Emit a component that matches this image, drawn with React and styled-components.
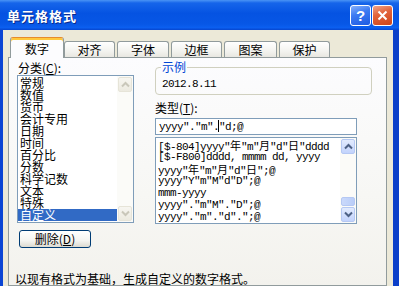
import React from "react"
import styled, { createGlobalStyle } from "styled-components"

const categories = [
  "常规",
  "数值",
  "货币",
  "会计专用",
  "日期",
  "时间",
  "百分比",
  "分数",
  "科学记数",
  "文本",
  "特殊",
  "自定义",
]

const formats = [
  '[$-804]yyyy"年"m"月"d"日"dddd',
  "[$-F800]dddd, mmmm dd, yyyy",
  'yyyy"年"m"月"d"日";@',
  'yyyy"Y"m"M"d"D";@',
  "mmm-yyyy",
  'yyyy"."m"M"."D";@',
  'yyyy"."m"."d".";@',
]

const tabs = [
  { label: "数字", width: 54, active: true },
  { label: "对齐", width: 51, gap: 0 },
  { label: "字体", width: 52, gap: 2 },
  { label: "边框", width: 51, gap: 2 },
  { label: "图案", width: 53, gap: 2 },
  { label: "保护", width: 51, gap: 2 },
]

const HAN = /([\u3000-\u9fff\uff00-\uffef]+)/

const mixed = text =>
  text.split(HAN).map((part, i) =>
    HAN.test(part) ? <Han key={i}>{part}</Han> : part
  )

const Chevron = ({ up, color }) => (
  <svg width="9" height="7" viewBox="0 0 9 7">
    <polyline
      points={up ? "1,5.5 4.5,2 8,5.5" : "1,1.5 4.5,5 8,1.5"}
      fill="none"
      stroke={color}
      strokeWidth="2"
    />
  </svg>
)

const ScrollBar = ({ disabled, thumb }) => (
  <Scroll>
    <ScrollBtn $disabled={disabled}>
      <Chevron up color={disabled ? "#C9C7BA" : "#4D6185"} />
    </ScrollBtn>
    <Track>{thumb && <Thumb />}</Track>
    <ScrollBtn $disabled={disabled}>
      <Chevron color={disabled ? "#C9C7BA" : "#4D6185"} />
    </ScrollBtn>
  </Scroll>
)

const App = () => {
  return (
    <>
      <GlobalStyle />
      <Window>
        <TitleBar>
          <Title>单元格格式</Title>
          <CaptionButton $kind="help">?</CaptionButton>
          <CaptionButton $kind="close">
            <svg width="11" height="11" viewBox="0 0 11 11">
              <path
                d="M1.5 1.5 L9.5 9.5 M9.5 1.5 L1.5 9.5"
                stroke="#fff"
                strokeWidth="2"
              />
            </svg>
          </CaptionButton>
        </TitleBar>
        <Body>
          <TabStrip>
            {tabs.map(tab => (
              <Tab
                key={tab.label}
                $active={tab.active}
                $width={tab.width}
                $gap={tab.gap || 0}
              >
                {tab.label}
              </Tab>
            ))}
          </TabStrip>
          <Panel>
            <Columns>
              <LeftColumn>
                <FieldLabel>
                  分类(<u>C</u>):
                </FieldLabel>
                <CategoryList>
                  <Items>
                    {categories.map(name => (
                      <Item key={name} $selected={name === "自定义"}>
                        {name}
                      </Item>
                    ))}
                  </Items>
                  <ScrollBar disabled />
                </CategoryList>
                <Button>
                  删除(<u>D</u>)
                </Button>
              </LeftColumn>
              <RightColumn>
                <Sample>
                  <SampleLegend>示例</SampleLegend>
                  <Mono>2012.8.11</Mono>
                </Sample>
                <TypeLabel>
                  类型(<u>T</u>):
                </TypeLabel>
                <TypeInput>
                  <Mono>
                    yyyy"."m".
                    <Caret />
                    "d;@
                  </Mono>
                </TypeInput>
                <FormatList>
                  <Rows>
                    {formats.map(f => (
                      <Row key={f}>{mixed(f)}</Row>
                    ))}
                  </Rows>
                  <ScrollBar thumb />
                </FormatList>
              </RightColumn>
            </Columns>
            <Hint>以现有格式为基础，生成自定义的数字格式。</Hint>
          </Panel>
        </Body>
      </Window>
    </>
  )
}

export default App

const GlobalStyle = createGlobalStyle`
  html, body {
    margin: 0;
    padding: 0;
    width: 399px;
    height: 286px;
    overflow: hidden;
    background: #ece9d8;
  }
  #root {
    width: 399px;
    height: 286px;
  }
  u {
    text-decoration-thickness: 1px;
    text-underline-offset: 1px;
  }
`

const Window = styled.div`
  display: flex;
  flex-direction: column;
  width: 399px;
  height: 286px;
  overflow: hidden;
  font-family: "Noto Sans CJK SC", "Liberation Sans", sans-serif;
  font-size: 12px;
  color: #000;
`

const TitleBar = styled.div`
  display: flex;
  align-items: center;
  gap: 1px;
  height: 30px;
  flex-shrink: 0;
  padding: 0 6px 0 7px;
  box-sizing: border-box;
  background: linear-gradient(
    180deg,
    #4a94f5 0%,
    #1665ea 10%,
    #0553e2 45%,
    #0757e6 80%,
    #0b5ff0 92%,
    #0646cf 100%
  );
`

const Title = styled.div`
  flex: 1;
  color: #fff;
  font-weight: bold;
  font-size: 13px;
  letter-spacing: 1px;
  text-shadow: 1px 1px 0 #0a2a8c;
`

const CaptionButton = styled.div`
  display: flex;
  align-items: center;
  justify-content: center;
  width: 21px;
  height: 21px;
  box-sizing: border-box;
  border: 1px solid #fff;
  border-radius: 3px;
  color: #fff;
  font-family: "Liberation Sans", sans-serif;
  font-weight: bold;
  font-size: 15px;
  background: ${p =>
    p.$kind === "close"
      ? "linear-gradient(160deg, #f0a58a 0%, #e2643c 40%, #cf4418 100%)"
      : "linear-gradient(160deg, #87b1fb 0%, #3d7bf2 40%, #1d5ae2 100%)"};
`

const Body = styled.div`
  flex: 1;
  min-height: 0;
  display: flex;
  flex-direction: column;
  background: #ece9d8;
  border-left: 3px solid #0b45d4;
  border-right: 6px solid #0b3fc9;
  padding: 7px 6px 0 5px;
`

const TabStrip = styled.div`
  display: flex;
  align-items: flex-end;
  height: 20px;
  flex-shrink: 0;
  padding-left: 2px;
`

const Tab = styled.div`
  position: relative;
  z-index: ${p => (p.$active ? 1 : 0)};
  display: flex;
  align-items: center;
  justify-content: center;
  box-sizing: border-box;
  width: ${p => p.$width}px;
  height: ${p => (p.$active ? 21 : 16)}px;
  margin-left: ${p => p.$gap}px;
  margin-bottom: ${p => (p.$active ? -1 : 0)}px;
  padding-top: 1px;
  border: 1px solid #919b9c;
  border-bottom: none;
  border-top-color: ${p => (p.$active ? "#e68b2c" : "#919b9c")};
  border-radius: 3px 3px 0 0;
  background: ${p =>
    p.$active
      ? "#fcfcfe"
      : "linear-gradient(180deg, #ffffff 0%, #f3f3ef 60%, #e8e7e1 100%)"};
  box-shadow: ${p => (p.$active ? "inset 0 2px 0 #ffc83c" : "none")};
  line-height: 12px;
`

const Panel = styled.div`
  flex: 1;
  min-height: 0;
  display: flex;
  flex-direction: column;
  border: 1px solid #919b9c;
  background: linear-gradient(180deg, #fcfcfe 0%, #f7f7f4 60%, #f3f2ed 100%);
  padding: 3px 0 0 6px;
`

const Columns = styled.div`
  display: flex;
  align-items: flex-start;
  flex-shrink: 0;
  gap: 21px;
  padding-left: 2px;
`

const LeftColumn = styled.div`
  display: flex;
  flex-direction: column;
  width: 117px;
`

const FieldLabel = styled.div`
  height: 14px;
  line-height: 14px;
  padding-left: 1px;
`

const CategoryList = styled.div`
  display: flex;
  height: 148px;
  box-sizing: border-box;
  border: 1px solid #7f9db9;
  background: #fff;
`

const Items = styled.div`
  flex: 1;
  padding-top: 1px;
`

const Item = styled.div`
  height: 12px;
  line-height: 12px;
  padding-left: 2px;
  background: ${p => (p.$selected ? "#316ac5" : "transparent")};
  color: ${p => (p.$selected ? "#fff" : "#000")};
`

const Scroll = styled.div`
  display: flex;
  flex-direction: column;
  width: 16px;
  flex-shrink: 0;
  background: #fbfbf8;
  padding: 1px 0;
  box-sizing: border-box;
`

const ScrollBtn = styled.div`
  display: flex;
  align-items: center;
  justify-content: center;
  height: 15px;
  box-sizing: border-box;
  margin: 0 1px;
  border: 1px solid ${p => (p.$disabled ? "#e6e4d8" : "#b5c8f3")};
  border-radius: 2px;
  background: ${p =>
    p.$disabled
      ? "linear-gradient(180deg, #f7f6f1, #eceae0)"
      : "linear-gradient(180deg, #e2ebfe, #c2d3fc)"};
`

const Track = styled.div`
  flex: 1;
  display: flex;
  flex-direction: column;
  justify-content: flex-end;
  padding: 0 1px 1px;
`

const Thumb = styled.div`
  height: 7px;
  border: 1px solid #b5c8f3;
  border-radius: 2px;
  background: linear-gradient(90deg, #cad9fb, #b9cdf8);
`

const Button = styled.div`
  display: flex;
  align-items: center;
  justify-content: center;
  width: 72px;
  height: 18px;
  box-sizing: border-box;
  margin: 7px 0 0 2px;
  border: 1px solid #003c74;
  border-radius: 3px;
  background: linear-gradient(180deg, #ffffff 0%, #f4f4f0 60%, #dcdad0 100%);
  line-height: 12px;
`

const RightColumn = styled.div`
  display: flex;
  flex-direction: column;
  width: 217px;
`

const Sample = styled.fieldset`
  margin: 0;
  padding: 3px 6px 4px;
  border: 1px solid #d0d0bf;
  border-radius: 4px;
  line-height: 12px;
  min-width: 0;
`

const SampleLegend = styled.legend`
  padding: 0 1px;
  margin-left: -1px;
  line-height: 12px;
  color: #0046d5;
`

const TypeLabel = styled.div`
  margin-top: 6px;
  height: 14px;
  line-height: 14px;
`

const TypeInput = styled.div`
  display: flex;
  align-items: center;
  width: 202px;
  height: 17px;
  box-sizing: border-box;
  margin-top: 3px;
  padding-left: 3px;
  border: 1px solid #7f9db9;
  background: #fff;
`

const Mono = styled.span`
  font-family: "Liberation Mono", "Noto Sans CJK SC", monospace;
  font-size: 11px;
  letter-spacing: -0.6px;
  line-height: 12px;
  white-space: pre;
`

const Han = styled.span`
  font-family: "Noto Sans CJK SC", sans-serif;
  font-size: 11px;
  letter-spacing: 0;
`

const Caret = styled.span`
  display: inline-block;
  width: 1px;
  height: 12px;
  margin: 0 0 0 -1px;
  background: #000;
  vertical-align: -2px;
`

const FormatList = styled.div`
  display: flex;
  width: 202px;
  height: 87px;
  box-sizing: border-box;
  margin-top: 2px;
  border: 1px solid #7f9db9;
  background: #fff;
`

const Rows = styled.div`
  flex: 1;
  min-width: 0;
  padding: 1px 0 0 2px;
`

const Row = styled.div`
  height: 12px;
  line-height: 12px;
  font-family: "Liberation Mono", monospace;
  font-size: 11px;
  letter-spacing: -0.6px;
  white-space: nowrap;
`

const Hint = styled.div`
  margin-top: 25px;
  line-height: 12px;
`
